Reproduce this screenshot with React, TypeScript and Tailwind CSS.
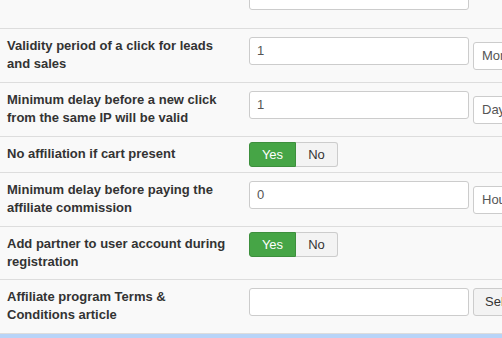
import React from "react";

type Row =
  | { kind: "unit"; label: string; value: string; unit: string }
  | { kind: "toggle"; label: string; yes: boolean; tight?: boolean }
  | { kind: "article"; label: string };

const rows: Row[] = [
  { kind: "unit", label: "Validity period of a click for leads and sales", value: "1", unit: "Month" },
  { kind: "unit", label: "Minimum delay before a new click from the same IP will be valid", value: "1", unit: "Day" },
  { kind: "toggle", label: "No affiliation if cart present", yes: true },
  { kind: "unit", label: "Minimum delay before paying the affiliate commission", value: "0", unit: "Hour" },
  { kind: "toggle", label: "Add partner to user account during registration", yes: true, tight: true },
  { kind: "article", label: "Affiliate program Terms & Conditions article" },
];

const font = { fontFamily: '"Liberation Sans", Arial, sans-serif' };

function TextBox({ value }: { value: string }) {
  return (
    <div className="w-[220px] h-[28px] shrink-0 flex items-center px-[7px] bg-white border border-[#cccccc] rounded-[3px] text-[13px] text-[#555555]">
      {value}
    </div>
  );
}

function Toggle({ yes }: { yes: boolean }) {
  return (
    <div className="-mt-[3px] -mb-[4px] flex h-[25px] text-[13px]">
      <div
        className={
          yes
            ? "w-[47px] flex items-center justify-center rounded-l-[3px] bg-[#46a546] border border-[#3d8f3d] text-white"
            : "w-[47px] flex items-center justify-center rounded-l-[3px] bg-[#f3f3f3] border border-[#cccccc] text-[#333333]"
        }
      >
        Yes
      </div>
      <div className="w-[42px] flex items-center justify-center rounded-r-[3px] bg-[#f3f3f3] border border-l-0 border-[#cccccc] text-[#333333]">
        No
      </div>
    </div>
  );
}

function FormRow({ row }: { row: Row }) {
  const tight = row.kind === "toggle" && row.tight;
  return (
    <div className={tight ? "flex border-t border-[#dddddd] pt-2 pb-[8px]" : "flex border-t border-[#dddddd] pt-2 pb-[9px]"}>
      <div className="w-[249px] shrink-0 pl-[7px] pr-3 text-[13px] leading-[18px] font-bold text-[#333333]">
        {row.label}
      </div>
      <div className="flex items-start gap-[4px] whitespace-nowrap">
        {row.kind === "unit" && (
          <>
            <TextBox value={row.value} />
            <div className="mt-[5px] w-[90px] h-[28px] shrink-0 flex items-center px-[8px] bg-white border border-[#cccccc] rounded-[3px] text-[13px] text-[#555555]">
              {row.unit}
            </div>
          </>
        )}
        {row.kind === "toggle" && <Toggle yes={row.yes} />}
        {row.kind === "article" && (
          <>
            <TextBox value="" />
            <div className="w-[70px] h-[28px] shrink-0 flex items-center px-[11px] bg-[#f3f3f3] border border-[#cccccc] rounded-[3px] text-[13px] text-[#333333]">
              Select
            </div>
          </>
        )}
      </div>
    </div>
  );
}

export default function App() {
  return (
    <div className="w-[502px] h-[338px] overflow-hidden bg-[#f9f9f9]" style={font}>
      {/* tail of the previous setting */}
      <div className="flex pb-[18px]">
        <div className="w-[249px] shrink-0" />
        <div className="-mt-[18px]">
          <TextBox value="1" />
        </div>
      </div>

      {rows.map((r, i) => (
        <FormRow key={i} row={r} />
      ))}

      <div className="h-[6px] border-t border-[#dddddd] bg-[#b8d4f8]" />
    </div>
  );
}
